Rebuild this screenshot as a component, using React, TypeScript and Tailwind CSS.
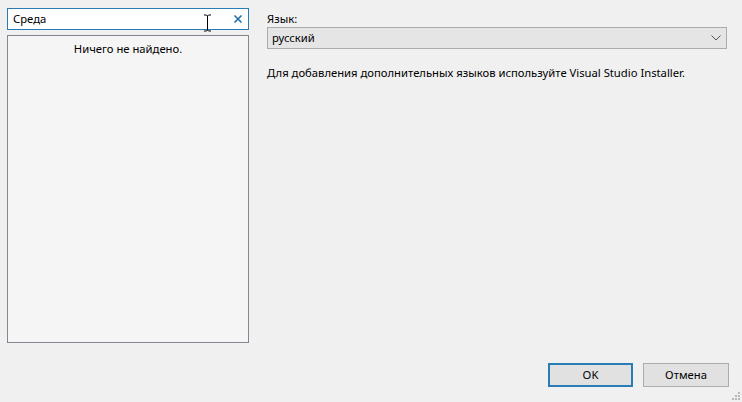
import React from "react";

const font = { fontFamily: '"Noto Sans", "Open Sans", sans-serif' };

const App: React.FC = () => {
  return (
    <div
      className="relative flex h-[402px] w-[742px] flex-col bg-[#f0f0f0] text-[11.25px] text-black"
      style={font}
    >
      <div className="flex flex-1 pl-[7px] pt-[8px]">
        {/* left: search + results */}
        <div className="flex w-[242px] flex-col">
          <div className="relative flex h-[22px] items-center border border-[#2a7db4] bg-white pl-[5px] pr-[4px]">
            <span className="flex-1 leading-none">Среда</span>
            <svg width="10" height="10" viewBox="0 0 10 10" className="mr-[1px]">
              <path d="M1.5 1.5 L8.5 8.5 M8.5 1.5 L1.5 8.5" stroke="#1f6ea8" strokeWidth="1.6" />
            </svg>
            {/* mouse cursor */}
            <svg
              width="9"
              height="18"
              viewBox="0 0 9 18"
              className="absolute left-[195px] top-[5px]"
            >
              <path
                d="M1 1 H3.5 L4.5 2 L5.5 1 H8 M4.5 2 V16 M1 17 H3.5 L4.5 16 L5.5 17 H8"
                stroke="#000"
                strokeWidth="1"
                fill="none"
              />
            </svg>
          </div>
          <div className="mt-[5px] h-[308px] border border-[#828790] bg-[#f5f5f5] pt-[5px] text-center">
            Ничего не найдено.
          </div>
        </div>

        {/* right: language */}
        <div className="ml-[18px] flex w-[460px] flex-col">
          <div className="mt-[2px] h-[17px] leading-[17px]">Язык:</div>
          <div className="flex h-[22px] items-center border border-[#acacac] bg-[#e5e5e5] pl-[4px] pr-[5px]">
            <span className="flex-1">русский</span>
            <svg width="10" height="6" viewBox="0 0 10 6">
              <path d="M0.5 0.5 L5 5 L9.5 0.5" stroke="#555" strokeWidth="1" fill="none" />
            </svg>
          </div>
          <div className="mt-[15px] leading-[17px]">
            Для добавления дополнительных языков используйте Visual Studio Installer.
          </div>
        </div>
      </div>

      {/* buttons */}
      <div className="flex justify-end gap-[10px] pb-[15px] pr-[13px]">
        <button className="h-[24px] w-[85px] border-2 border-[#2a7db4] bg-[#e1e1e1] leading-none">
          OK
        </button>
        <button className="h-[24px] w-[86px] border border-[#adadad] bg-[#e1e1e1] leading-none">
          Отмена
        </button>
      </div>

      {/* size grip */}
      <svg width="10" height="10" viewBox="0 0 10 10" className="absolute bottom-[1px] right-[1px]">
        <g fill="#b8b8b8">
          <rect x="7" y="1" width="2" height="2" />
          <rect x="4" y="4" width="2" height="2" />
          <rect x="7" y="4" width="2" height="2" />
          <rect x="1" y="7" width="2" height="2" />
          <rect x="4" y="7" width="2" height="2" />
          <rect x="7" y="7" width="2" height="2" />
        </g>
      </svg>
    </div>
  );
};

export default App;
